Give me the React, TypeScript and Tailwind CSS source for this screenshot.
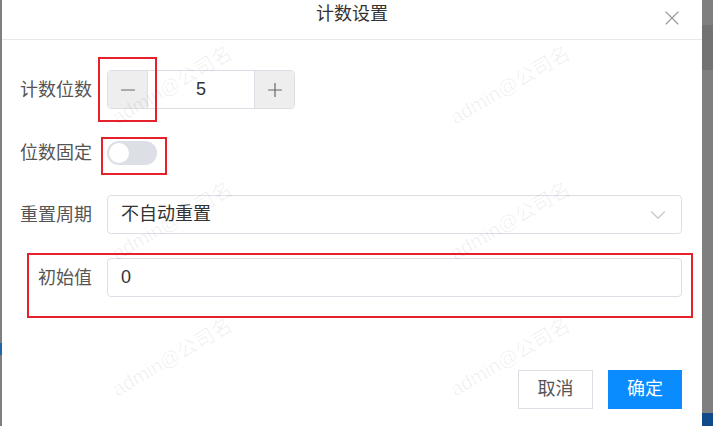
import { ChevronDown, Minus, Plus, X } from 'lucide-react';

const font = "font-['Liberation_Sans','Noto_Sans_CJK_SC',sans-serif]";

const marks = [
  { x: 170, y: 85 },
  { x: 508, y: 85 },
  { x: 170, y: 221 },
  { x: 508, y: 221 },
  { x: 170, y: 357 },
  { x: 508, y: 357 },
];

const FormRow = ({ label, children }: { label: string; children: React.ReactNode }) => (
  <div className="flex h-[39px] items-center">
    <div className="w-[105px] shrink-0 pr-[15px] text-right text-[18px] leading-[24px] text-[#555]">
      {label}
    </div>
    <div className="flex flex-1 items-center">{children}</div>
  </div>
);

const CounterDialog = () => {
  return (
    <div className={`relative flex flex-1 flex-col bg-white ${font}`}>
      <div className="grid h-[40px] grid-cols-[1fr_auto_1fr] border-b border-[#e8e8e8]">
        <div />
        <div className="pt-[2px] text-[18px] leading-[24px] text-[#333]">计数设置</div>
        <div className="flex justify-end pr-[18px] pt-[6px]">
          <X size={24} strokeWidth={1.1} className="text-[#999]" />
        </div>
      </div>

      <div className="flex flex-col pr-[20px] pt-[30px]">
        <FormRow label="计数位数">
          <div className="flex h-[39px] w-[188px] overflow-hidden rounded-[4px] border border-[#dcdfe6]">
            <div className="flex w-[40px] items-center justify-center border-r border-[#dcdfe6] bg-[#eeeeee]">
              <Minus size={22} strokeWidth={1.3} className="text-[#666]" />
            </div>
            <div className="flex flex-1 items-center justify-center text-[18px] text-[#333]">5</div>
            <div className="flex w-[40px] items-center justify-center border-l border-[#dcdfe6] bg-[#eeeeee]">
              <Plus size={22} strokeWidth={1.3} className="text-[#666]" />
            </div>
          </div>
        </FormRow>

        <div className="mt-[24px]">
          <FormRow label="位数固定">
            <div className="flex h-[24px] w-[50px] items-center rounded-full bg-[#dcdfe6] px-[2px]">
              <div className="h-[20px] w-[20px] rounded-full bg-white" />
            </div>
          </FormRow>
        </div>

        <div className="mt-[23px]">
          <FormRow label="重置周期">
            <div className="flex h-[39px] flex-1 items-center justify-between rounded-[4px] border border-[#dcdfe6] pl-[13px] pr-[10px] text-[18px] text-[#333]">
              <span>不自动重置</span>
              <ChevronDown size={26} strokeWidth={1} className="text-[#c0c4cc]" />
            </div>
          </FormRow>
        </div>

        <div className="mt-[24px]">
          <FormRow label="初始值">
            <div className="flex h-[39px] flex-1 items-center rounded-[4px] border border-[#dcdfe6] pl-[13px] text-[18px] text-[#333]">
              0
            </div>
          </FormRow>
        </div>
      </div>

      <div className="mt-auto flex justify-end gap-[15px] pb-[17px] pr-[20px]">
        <button className="h-[39px] w-[75px] border border-[#dcdfe6] bg-white text-[18px] text-[#555]">
          取消
        </button>
        <button className="h-[39px] w-[74px] bg-[#0a8cff] text-[18px] text-white">确定</button>
      </div>

      {marks.map((m, i) => (
        <div
          key={i}
          className="pointer-events-none absolute -translate-x-1/2 -translate-y-1/2 -rotate-[30deg] whitespace-nowrap text-[20px] text-black/[0.06]"
          style={{ left: m.x, top: m.y }}
        >
          admin@公司名
        </div>
      ))}

      <div className="pointer-events-none absolute left-[96px] top-[57px] h-[65px] w-[59px] border-2 border-[#e5222b]" />
      <div className="pointer-events-none absolute left-[99px] top-[137px] h-[38px] w-[66px] border-2 border-[#e5222b]" />
      <div className="pointer-events-none absolute left-[25px] top-[253px] h-[65px] w-[666px] border-2 border-[#e5222b]" />
    </div>
  );
};

export default function App() {
  return (
    <div className="flex h-[426px] w-[713px] overflow-hidden bg-[#7f7f7f]">
      <div className="flex w-[2px] flex-col">
        <div className="h-[343px]" />
        <div className="h-[12px] bg-[#2563a8]" />
      </div>
      <CounterDialog />
      <div className="flex w-[11px] flex-col">
        <div className="h-[25px]" />
        <div className="h-[45px] bg-[#737373]" />
        <div className="flex-1" />
        <div className="h-[13px] bg-[#0f4a8a]" />
      </div>
    </div>
  );
}
